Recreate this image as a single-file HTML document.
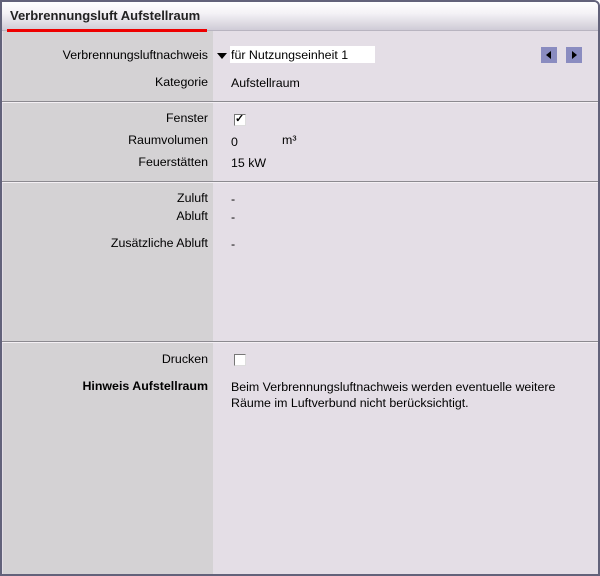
<!DOCTYPE html><html><head><style>
body{margin:0;width:600px;height:576px;overflow:hidden;background:#fff;font-family:"Liberation Sans",sans-serif;font-size:12.4px;color:#000}
.f{position:absolute;left:0;top:0;width:596px;height:572px;border:2px solid #62627a;border-radius:0 6px 0 0;background:#e4dee6;overflow:hidden}
.t{position:absolute;left:0;top:0;width:596px;height:28px;background:linear-gradient(#fff,#f4f2f6 40%,#cfcbd6);border-bottom:1px solid #b8b4c0}
.t b{position:absolute;left:8px;top:6px;font-size:13px;color:#222}
.red{position:absolute;left:5px;top:27px;width:200px;height:3px;background:#e00}
.l{position:absolute;left:1px;top:29px;width:210px;height:545px;background:#d4d2d4}
.hr{position:absolute;left:0;width:596px;height:1px;background:#8c8a90;border-bottom:1px solid #f4f0f4}
.k{position:absolute;right:390px;text-align:right;white-space:nowrap}
.v{position:absolute;left:229px;white-space:nowrap}
.cb{position:absolute;left:232px;width:10px;height:10px;background:#fff;border:1px solid;border-color:#777 #ddd #ddd #777}
.btn{position:absolute;top:45px;width:16px;height:16px;background:#8a8cc0}
</style></head><body><div class="f">
<div class="l"></div>
<div class="t"><b>Verbrennungsluft Aufstellraum</b></div>
<div class="red"></div>
<div class="k" style="top:46px">Verbrennungsluftnachweis</div>
<div style="position:absolute;left:215px;top:51px;width:0;height:0;border-left:5px solid transparent;border-right:5px solid transparent;border-top:6px solid #000"></div>
<div style="position:absolute;left:228px;top:44px;width:145px;height:17px;background:#fff"></div>
<div class="v" style="top:46px">für Nutzungseinheit 1</div>
<div class="btn" style="left:539px"><div style="position:absolute;left:5px;top:4px;border-top:4px solid transparent;border-bottom:4px solid transparent;border-right:5px solid #000"></div></div>
<div class="btn" style="left:564px"><div style="position:absolute;left:6px;top:4px;border-top:4px solid transparent;border-bottom:4px solid transparent;border-left:5px solid #000"></div></div>
<div class="k" style="top:73px">Kategorie</div><div class="v" style="top:74px">Aufstellraum</div>
<div class="hr" style="top:99px"></div>
<div class="k" style="top:109px">Fenster</div>
<div class="cb" style="top:112px"><span style="position:absolute;left:0;top:-3px;font-size:11px;font-weight:bold">✓</span></div>
<div class="k" style="top:131px">Raumvolumen</div><div class="v" style="top:133px">0</div><div class="v" style="left:280px;top:131px">m³</div>
<div class="k" style="top:153px">Feuerstätten</div><div class="v" style="top:154px">15 kW</div>
<div class="hr" style="top:179px"></div>
<div class="k" style="top:189px">Zuluft</div><div class="v" style="top:190px">-</div>
<div class="k" style="top:207px">Abluft</div><div class="v" style="top:208px">-</div>
<div class="k" style="top:234px">Zusätzliche Abluft</div><div class="v" style="top:235px">-</div>
<div class="hr" style="top:339px"></div>
<div class="k" style="top:350px">Drucken</div><div class="cb" style="top:352px"></div>
<div class="k" style="top:377px;font-weight:bold">Hinweis Aufstellraum</div>
<div class="v" style="top:377px;line-height:16px">Beim Verbrennungsluftnachweis werden eventuelle weitere<br>Räume im Luftverbund nicht berücksichtigt.</div>
</div></body></html>
